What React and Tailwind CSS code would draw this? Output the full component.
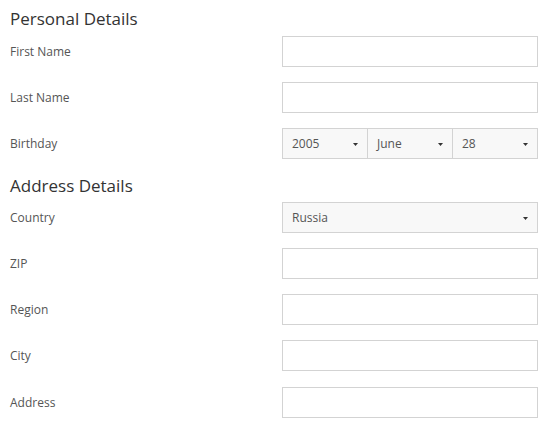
import React from "react";

function Row({ label, children, className = "" }) {
  return (
    <div className={"flex h-[46px] items-start " + className}>
      <div className="flex h-[31px] w-[272px] items-center pt-px text-[12px] text-[#555]">{label}</div>
      <div className="flex h-[31px] w-[256px]">{children}</div>
    </div>
  );
}

function Input() {
  return <div className="h-full w-full border border-[#d3d3d3] bg-white" />;
}

function Select({ value, className = "" }) {
  return (
    <div className={"flex h-full flex-1 items-center justify-between border border-[#d3d3d3] bg-[#f8f8f8] pl-[9px] pr-[9px] pt-px text-[12px] text-[#555] " + className}>
      <span>{value}</span>
      <svg width="5" height="3" viewBox="0 0 5 3" className="block">
        <polygon points="0,0 5,0 2.5,3" fill="#333" />
      </svg>
    </div>
  );
}

export default function App() {
  return (
    <div
      className="h-[430px] w-[550px] bg-white pl-[10px]"
      style={{ fontFamily: '"Open Sans", sans-serif' }}
    >
      <div className="h-[36px] pt-[7px] text-[17px] leading-[24px] text-[#333]">Personal Details</div>
      <Row label="First Name"><Input /></Row>
      <Row label="Last Name"><Input /></Row>
      <Row label="Birthday">
        <Select value="2005" />
        <Select value="June" className="-ml-px" />
        <Select value="28" className="-ml-px" />
      </Row>
      <div className="h-[28px] pt-px text-[17px] leading-[22px] text-[#333]">Address Details</div>
      <Row label="Country"><Select value="Russia" /></Row>
      <Row label="ZIP"><Input /></Row>
      <Row label="Region"><Input /></Row>
      <Row label="City"><Input /></Row>
      <Row label="Address" className="mt-px"><Input /></Row>
    </div>
  );
}
